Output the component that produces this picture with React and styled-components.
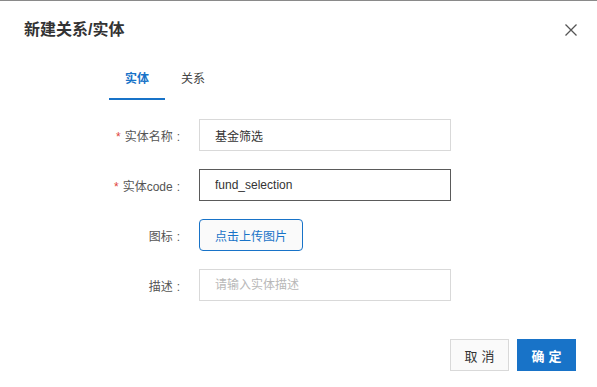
import React from "react";
import styled, { createGlobalStyle } from "styled-components";

const GlobalStyle = createGlobalStyle`
  html, body {
    margin: 0;
    padding: 0;
    background: #fff;
  }
  body {
    font-family: "Liberation Sans", "Noto Sans CJK SC", sans-serif;
    color: #333;
  }
  * {
    box-sizing: border-box;
  }
`;

const fields = [
  { label: "实体名称", required: true, value: "基金筛选" },
  { label: "实体code", required: true, value: "fund_selection", focused: true },
  { label: "图标", upload: true },
  { label: "描述", placeholder: "请输入实体描述" },
];

const App = () => {
  const [tab, setTab] = React.useState("entity");

  return (
    <>
      <GlobalStyle />
      <Modal>
        <Header>
          <Title>新建关系/实体</Title>
          <CloseButton aria-label="close">
            <svg width="12" height="12" viewBox="0 0 12 12">
              <path d="M0.5 0.5 L11.5 11.5 M11.5 0.5 L0.5 11.5" stroke="#555" strokeWidth="1.3" fill="none" />
            </svg>
          </CloseButton>
        </Header>

        <Tabs>
          <Tab active={tab === "entity"} onClick={() => setTab("entity")}>实体</Tab>
          <Tab active={tab === "relation"} onClick={() => setTab("relation")}>关系</Tab>
        </Tabs>

        <Form>
          {fields.map((f) => (
            <Row key={f.label}>
              <Label>
                {f.required && <Star>*</Star>}
                {f.label}
                <Colon>:</Colon>
              </Label>
              {f.upload ? (
                <UploadButton>点击上传图片</UploadButton>
              ) : (
                <Input
                  focused={f.focused}
                  defaultValue={f.value}
                  placeholder={f.placeholder}
                />
              )}
            </Row>
          ))}
        </Form>

        <Footer>
          <FooterButton>取消</FooterButton>
          <FooterButton primary>确定</FooterButton>
        </Footer>
      </Modal>
    </>
  );
};

export default App;

const Modal = styled.div`
  width: 597px;
  height: 387px;
  border-top: 1px solid #8a8a8a;
  background: #fff;
  display: flex;
  flex-direction: column;
`;

const Header = styled.div`
  height: 58px;
  padding: 0 20px 0 24px;
  display: flex;
  align-items: center;
  justify-content: space-between;
`;

const Title = styled.h2`
  margin: 0;
  font-size: 16px;
  font-weight: 600;
  line-height: 22px;
  color: #333;
`;

const CloseButton = styled.button`
  width: 12px;
  height: 12px;
  padding: 0;
  border: none;
  background: none;
  display: flex;
  cursor: pointer;
`;

const Tabs = styled.div`
  display: flex;
  padding-left: 109px;
`;

const Tab = styled.div`
  padding: 12px 16px 11px;
  line-height: 16px;
  font-size: 12px;
  font-weight: ${(p) => (p.active ? 600 : 400)};
  color: ${(p) => (p.active ? "#1873c8" : "#444")};
  border-bottom: 2px solid ${(p) => (p.active ? "#1873c8" : "transparent")};
  cursor: pointer;
`;

const Form = styled.div`
  margin-top: 19px;
  display: flex;
  flex-direction: column;
  gap: 18px;
`;

const Row = styled.div`
  display: grid;
  grid-template-columns: 180px 252px;
  column-gap: 19px;
  align-items: center;
  height: 32px;
`;

const Label = styled.label`
  text-align: right;
  font-size: 12px;
  color: #555;
`;

const Star = styled.span`
  color: #e0443a;
  margin-right: 4px;
`;

const Colon = styled.span`
  margin-left: 4px;
`;

const Input = styled.input`
  width: 252px;
  height: 32px;
  padding: 0 15px;
  font-family: inherit;
  font-size: 12px;
  color: #333;
  border: 1px solid ${(p) => (p.focused ? "#5a5a5a" : "#d9d9d9")};
  border-radius: 0;
  outline: none;
  background: #fff;

  &::placeholder {
    color: #b8b8b8;
  }
`;

const UploadButton = styled.button`
  width: 104px;
  height: 32px;
  padding: 0;
  font-family: inherit;
  font-size: 12px;
  color: #1873c8;
  background: #fafafa;
  border: 1px solid #1873c8;
  border-radius: 4px;
  cursor: pointer;
`;

const Footer = styled.div`
  margin-top: 38px;
  padding-right: 21px;
  display: flex;
  justify-content: flex-end;
  gap: 8px;
`;

const FooterButton = styled.button`
  width: 59px;
  height: 32px;
  padding: 0 0 0 4px;
  font-family: inherit;
  font-size: 13px;
  font-weight: ${(p) => (p.primary ? 600 : 400)};
  letter-spacing: 4px;
  color: ${(p) => (p.primary ? "#fff" : "#333")};
  background: ${(p) => (p.primary ? "#1873c8" : "#fafafa")};
  border: 1px solid ${(p) => (p.primary ? "#1873c8" : "#d9d9d9")};
  border-radius: 0;
  cursor: pointer;
`;
